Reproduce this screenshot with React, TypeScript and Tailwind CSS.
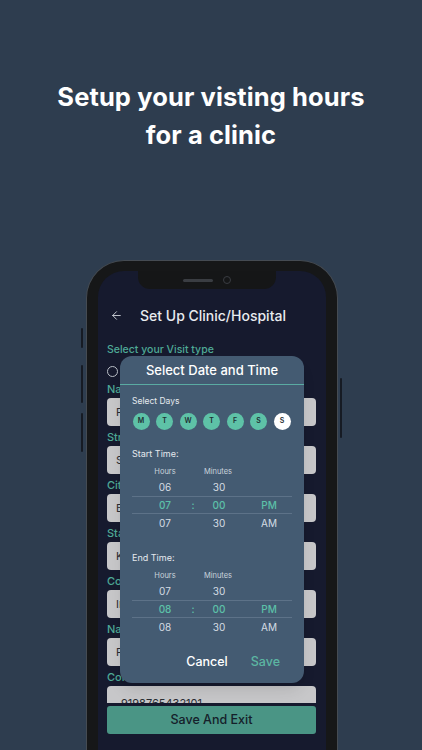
import { ArrowLeft } from "lucide-react";

const days = ["M", "T", "W", "T", "F", "S", "S"];

const fields = [
  { label: "Name", value: "P" },
  { label: "Street", value: "S" },
  { label: "City", value: "B" },
  { label: "State", value: "K" },
  { label: "Country", value: "In" },
  { label: "Name", value: "P" },
  { label: "Contact", value: "9198765432101" },
];

type Row = [string, string, string];

function TimePicker({ rows }: { rows: Row[] }) {
  return (
    <div className="mt-[6px]">
      <div className="flex h-[12px] items-center pl-[8px] text-[7.5px] text-[#c9d3dc]">
        <span className="w-[50px] text-center">Hours</span>
        <span className="w-[4px]" />
        <span className="w-[48px] text-center">Minutes</span>
      </div>
      {rows.map((r, i) => (
        <div
          key={i}
          className={`flex h-[18px] items-center pl-[8px] text-[10px] ${
            i === 1
              ? "border-y border-[#5d7288] font-medium text-[#5cc0a8]"
              : "text-[#d5dde4]"
          }`}
        >
          <span className="w-[50px] text-center">{r[0]}</span>
          <span className="w-[6px] text-center">{i === 1 ? ":" : ""}</span>
          <span className="w-[46px] text-center">{r[1]}</span>
          <span className="w-[12px]" />
          <span className="w-[30px] text-center">{r[2]}</span>
        </div>
      ))}
    </div>
  );
}

function Dialog() {
  return (
    <div className="absolute left-[22px] top-[85px] flex h-[327px] w-[184px] flex-col rounded-[12px] bg-[#445b72] shadow-lg">
      <div className="flex h-[29px] items-center justify-center border-b border-[#5aaba2] pt-[1px] text-[13px] font-medium text-white">
        Select Date and Time
      </div>
      <div className="px-[12px]">
        <p className="mt-[10px] text-[8.5px] leading-[12px] text-[#e4e9ee]">Select Days</p>
        <div className="mt-[6px] flex gap-[6.5px] pl-[0.5px]">
          {days.map((d, i) => (
            <div
              key={i}
              className={`flex h-[17px] w-[17px] items-center justify-center rounded-full text-[7px] font-semibold text-[#1f2f33] ${
                i === 6 ? "bg-white" : "bg-[#5ec2a7]"
              }`}
            >
              {d}
            </div>
          ))}
        </div>
        <p className="mt-[18px] text-[9px] leading-[12px] text-[#e4e9ee]">Start Time:</p>
        <TimePicker
          rows={[
            ["06", "30", ""],
            ["07", "00", "PM"],
            ["07", "30", "AM"],
          ]}
        />
        <p className="mt-[20px] text-[9px] leading-[12px] text-[#e4e9ee]">End Time:</p>
        <TimePicker
          rows={[
            ["07", "30", ""],
            ["08", "00", "PM"],
            ["08", "30", "AM"],
          ]}
        />
      </div>
      <div className="mt-auto mb-[11px] flex items-center justify-end gap-[23px] pr-[24px] text-[12.5px] font-medium">
        <span className="text-white">Cancel</span>
        <span className="text-[#5cb6a2]">Save</span>
      </div>
    </div>
  );
}

function Screen() {
  return (
    <div className="relative h-[520px] overflow-hidden rounded-t-[26px] bg-[#161a2e]">
      {/* notch */}
      <div className="absolute left-[40px] top-0 flex h-[18px] w-[138px] items-center justify-center gap-[10px] rounded-b-[12px] bg-[#151617]">
        <div className="h-[3px] w-[30px] rounded-full bg-[#3a3d42]" />
        <div className="h-[8px] w-[8px] rounded-full border border-[#3a3d42]" />
      </div>

      <div className="flex flex-col pt-[32px]">
        <div className="flex h-[24px] items-center pl-[12px]">
          <ArrowLeft className="h-[13px] w-[13px] text-[#d8dce2]" strokeWidth={1.6} />
          <span className="ml-[17px] text-[14px] font-medium text-[#e8ebef]">
            Set Up Clinic/Hospital
          </span>
        </div>

        <div className="mt-[16px] h-[360px] overflow-hidden px-[9px] pr-[10px]">
          <p className="text-[10.5px] font-medium leading-[14px] text-[#4ea996]">
            Select your Visit type
          </p>
          <div className="mt-[8px] flex h-[12px] items-center">
            <div className="h-[11px] w-[11px] rounded-full border border-[#b9bec6]" />
          </div>
          <div className="mt-[5px] flex flex-col gap-[4px]">
            {fields.map((f, i) => (
              <div key={i} className="flex flex-col gap-[2px]">
                <span className="text-[11px] font-medium leading-[14px] text-[#4ea996]">
                  {f.label}
                </span>
                <div
                  className={`flex h-[28px] rounded-[4px] bg-[#c7c7c9] pl-[9px] text-[11px] leading-[14px] text-[#2a2d33] ${
                    i === 6 ? "items-start pl-[14px] pt-[10px]" : "items-center"
                  }`}
                >
                  {f.value}
                </div>
              </div>
            ))}
          </div>
        </div>

        <div className="mx-[9px] mr-[10px] mt-[3px] flex h-[28px] items-center justify-center rounded-[3px] bg-[#4a9585] text-[12.5px] font-medium text-[#15202a]">
          Save And Exit
        </div>
      </div>

      <Dialog />
    </div>
  );
}

export default function App() {
  return (
    <div
      className="flex h-[750px] w-[422px] flex-col items-center overflow-hidden bg-[#2e3d4f]"
      style={{ fontFamily: "Inter, 'Noto Sans', sans-serif" }}
    >
      <h1 className="mt-[78px] text-center text-[25.5px] font-bold leading-[38px] tracking-[0.1px] text-white">
        Setup your visting hours
        <br />
        for a clinic
      </h1>

      <div className="relative mt-[106px] ml-[2px] w-[252px] shrink-0">
        {/* side buttons */}
        <div className="absolute -left-[5px] top-[68px] h-[20px] w-[2px] rounded bg-[#161b24]" />
        <div className="absolute -left-[5px] top-[105px] h-[38px] w-[2px] rounded bg-[#161b24]" />
        <div className="absolute -left-[5px] top-[153px] h-[39px] w-[2px] rounded bg-[#161b24]" />
        <div className="absolute -right-[4px] top-[118px] h-[60px] w-[2px] rounded bg-[#161b24]" />

        <div className="rounded-t-[38px] border border-b-0 border-[#454b52] bg-[#161718] px-[11px] pt-[10px]">
          <Screen />
        </div>
      </div>
    </div>
  );
}
